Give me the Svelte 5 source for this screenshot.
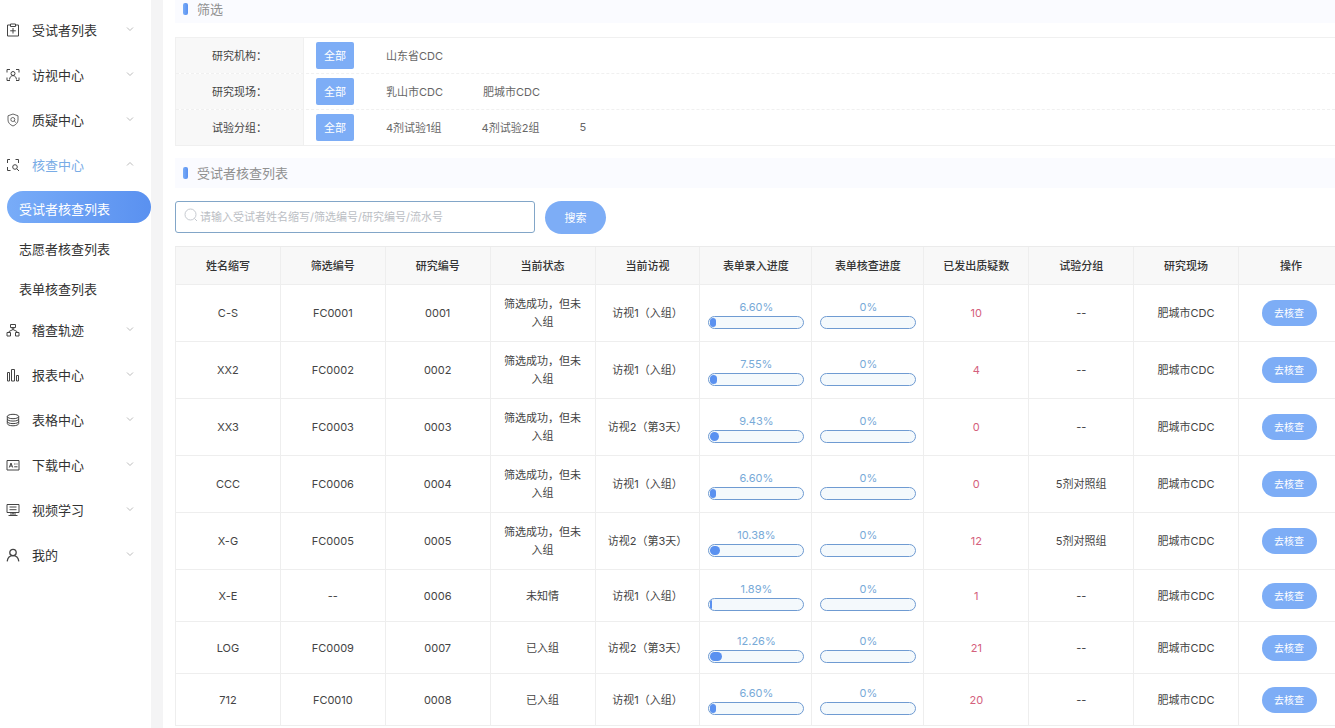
<script>
  let menus = [
    { title: "受试者列表", icon: "clipboard" },
    { title: "访视中心", icon: "visit" },
    { title: "质疑中心", icon: "shield" },
    {
      title: "核查中心",
      icon: "check",
      open: true,
      children: ["受试者核查列表", "志愿者核查列表", "表单核查列表"],
    },
    { title: "稽查轨迹", icon: "tree" },
    { title: "报表中心", icon: "bars" },
    { title: "表格中心", icon: "database" },
    { title: "下载中心", icon: "card" },
    { title: "视频学习", icon: "monitor" },
    { title: "我的", icon: "user" },
  ];
  let activePage = "受试者核查列表";

  let filters = [
    { label: "研究机构", options: ["山东省CDC"], selected: "全部" },
    { label: "研究现场", options: ["乳山市CDC", "肥城市CDC"], selected: "全部" },
    {
      label: "试验分组",
      options: ["4剂试验1组", "4剂试验2组", "5"],
      selected: "全部",
    },
  ];

  let columns = [
    "姓名缩写",
    "筛选编号",
    "研究编号",
    "当前状态",
    "当前访视",
    "表单录入进度",
    "表单核查进度",
    "已发出质疑数",
    "试验分组",
    "研究现场",
    "操作",
  ];

  const passed = "筛选成功，但未入组";
  const visit1 = "访视1（入组）";
  const visit2 = "访视2（第3天）";
  const site = "肥城市CDC";

  let subjects = [
    { name: "C-S", screen: "FC0001", no: "0001", status: passed, visit: visit1, entry: "6.60", check: "0", queries: 10, group: "--", site },
    { name: "XX2", screen: "FC0002", no: "0002", status: passed, visit: visit1, entry: "7.55", check: "0", queries: 4, group: "--", site },
    { name: "XX3", screen: "FC0003", no: "0003", status: passed, visit: visit2, entry: "9.43", check: "0", queries: 0, group: "--", site },
    { name: "CCC", screen: "FC0006", no: "0004", status: passed, visit: visit1, entry: "6.60", check: "0", queries: 0, group: "5剂对照组", site },
    { name: "X-G", screen: "FC0005", no: "0005", status: passed, visit: visit2, entry: "10.38", check: "0", queries: 12, group: "5剂对照组", site },
    { name: "X-E", screen: "--", no: "0006", status: "未知情", visit: visit1, entry: "1.89", check: "0", queries: 1, group: "--", site },
    { name: "LOG", screen: "FC0009", no: "0007", status: "已入组", visit: visit2, entry: "12.26", check: "0", queries: 21, group: "--", site },
    { name: "712", screen: "FC0010", no: "0008", status: "已入组", visit: visit1, entry: "6.60", check: "0", queries: 20, group: "--", site },
  ];

  let keyword = "";

  function toggle(menu) {
    menu.open = !menu.open;
    menus = menus;
  }

  function select(filter, option) {
    filter.selected = option;
    filters = filters;
  }
</script>

<div class="layout">
  <nav class="sidebar">
    {#each menus as menu}
      <button
        class="menu"
        class:menu--open={menu.open}
        on:click={() => toggle(menu)}
      >
        <svg class="menu__icon" viewBox="0 0 14 14" aria-hidden="true">
          {#if menu.icon === "clipboard"}
            <path d="M4.5 2H1.5v11h11V2H9.5M4.5 1h5v2.500h-5zM7 5v5.500M4.200 7.800h5.600" />
          {:else if menu.icon === "visit"}
            <path d="M4 1.500H1V4.500M10 1.500h3V4.500M4 12.500H1V9.500M10 12.500h3V9.500" />
            <circle cx="7" cy="5.500" r="2" />
            <path d="M3.500 11.500c.3-2.400 1.600-3.900 3.500-3.900s3.200 1.500 3.500 3.900" />
          {:else if menu.icon === "shield"}
            <path class="thin" d="M7 1l5 1.800v4.200c0 2.700-1.900 4.700-5 6-3.100-1.300-5-3.300-5-6V2.800z" />
            <circle class="thin" cx="6.800" cy="6.500" r="2" />
            <path class="thin" d="M8.200 8l1.600 1.500" />
          {:else if menu.icon === "check"}
            <path d="M4 1.500H1.500V5M9.500 1.500h3V5M4.500 12.500h-3V9" />
            <circle cx="9" cy="9" r="2.300" />
            <path d="M10.700 10.700l2.300 2.300" />
          {:else if menu.icon === "tree"}
            <path d="M4.500 1.500h5v3h-5zM5.500 4.500L7 6.500l1.500-2M7 6.500L3 8.500v1M7 6.500l4 2v1M1 13V9.500h3.500V13zM9.500 13V9.500H13V13z" />
          {:else if menu.icon === "bars"}
            <path d="M1.500 4.500h2v8.500h-2zM5.500 1.500h3V13h-3zM10.500 7.500h2V13h-2z" />
          {:else if menu.icon === "database"}
            <ellipse cx="7" cy="3.500" rx="5.700" ry="2.200" />
            <path d="M1.300 3.500v7c0 1.300 2.400 2.300 5.700 2.300s5.700-1 5.700-2.300v-7M1.300 6c0 1.200 2.400 2.100 5.700 2.100S12.700 7.200 12.700 6M1.300 8.500c0 1.200 2.400 2.100 5.700 2.100s5.700-.9 5.700-2.100" />
          {:else if menu.icon === "card"}
            <path d="M1 2.500h12v9.500H1zM3.300 9.500L5 5l1.700 4.500M4 8h2M8.200 6h1.300M10.500 6h1M8.200 8.800h3.300" />
          {:else if menu.icon === "monitor"}
            <path d="M1 1.500h12v8H1zM3.500 4h7M3.500 6.700h7M2.500 12.500h9M7 9.500v1.500M4 11h6" />
          {:else}
            <circle class="bold" cx="7" cy="4.500" r="3.200" />
            <path class="bold" d="M1.200 13.300C1.700 9.800 4 7.700 7 7.700s5.300 2.100 5.800 5.600" />
          {/if}
        </svg>
        <span class="menu__title">{menu.title}</span>
        <svg class="menu__arrow" viewBox="0 0 8 8" aria-hidden="true">
          <path d={menu.open ? "M1 5.500l3-3 3 3" : "M1 2.500l3 3 3-3"} />
        </svg>
      </button>
      {#if menu.open && menu.children}
        <div class="submenu">
          {#each menu.children as page}
            <a
              href="#{page}"
              class="submenu__item"
              class:submenu__item--active={page === activePage}
              on:click={() => (activePage = page)}>{page}</a
            >
          {/each}
        </div>
      {/if}
    {/each}
  </nav>

  <main class="content">
    <h2 class="section-title section-title--top">筛选</h2>

    <div class="filters">
      {#each filters as filter}
        <div class="filter">
          <div class="filter__label">{filter.label}：</div>
          <div class="filter__options">
            {#each ["全部", ...filter.options] as option}
              <button
                class="option"
                class:option--active={filter.selected === option}
                on:click={() => select(filter, option)}>{option}</button
              >
            {/each}
          </div>
        </div>
      {/each}
    </div>

    <h2 class="section-title">受试者核查列表</h2>

    <form class="search" on:submit|preventDefault>
      <label class="search__box">
        <svg class="search__icon" viewBox="0 0 14 14" aria-hidden="true">
          <circle cx="6.500" cy="6.500" r="5.500" />
          <path d="M10.500 10.500L13 13" />
        </svg>
        <input
          type="text"
          class="search__input"
          aria-label="搜索受试者"
          placeholder="请输入受试者姓名缩写/筛选编号/研究编号/流水号"
          bind:value={keyword}
        />
      </label>
      <button class="search__button">搜索</button>
    </form>

    <table class="table">
      <thead>
        <tr>
          {#each columns as column}
            <th class:wide={column.endsWith("进度")}>{column}</th>
          {/each}
        </tr>
      </thead>
      <tbody>
        {#each subjects as subject}
          <tr>
            <td>{subject.name}</td>
            <td>{subject.screen}</td>
            <td>{subject.no}</td>
            <td>{subject.status}</td>
            <td>{subject.visit}</td>
            {#each [subject.entry, subject.check] as percent}
              <td class="progress-cell">
                <div class="percent">{percent}%</div>
                <div
                  class="progress"
                  role="progressbar"
                  aria-label="进度"
                  aria-valuenow={Number(percent)}
                >
                  <div class="progress__fill" style="width: {percent}%"></div>
                </div>
              </td>
            {/each}
            <td class="queries">{subject.queries}</td>
            <td>{subject.group}</td>
            <td>{subject.site}</td>
            <td><button class="go">去核查</button></td>
          </tr>
        {/each}
      </tbody>
    </table>
  </main>
</div>

<style>
  :global(body) {
    margin: 0;
    background: #fff;
    font-family: Inter, "Noto Sans CJK SC", sans-serif;
    font-size: 11px;
    color: #555;
  }

  * {
    box-sizing: border-box;
  }

  button,
  input {
    font-family: inherit;
    font-size: 11px;
    border: none;
    padding: 0;
    background: none;
  }

  button {
    cursor: pointer;
  }

  svg {
    fill: none;
    flex: none;
  }

  .layout {
    display: flex;
    height: 100vh;
    overflow: hidden;
  }

  .sidebar {
    flex: none;
    width: 163px;
    padding-top: 8px;
    border-right: 12px solid #f4f4f5;
  }

  .menu {
    display: flex;
    align-items: center;
    width: 100%;
    height: 45px;
    padding: 0 17px 2px 6px;
    color: #333;
    text-align: left;
  }

  .menu__icon {
    width: 14px;
    height: 14px;
    stroke: #444;
    stroke-width: 1;
  }

  .menu__icon .thin {
    stroke-width: 0.8;
  }

  .menu__icon .bold {
    stroke-width: 1.3;
  }

  .menu__title {
    flex: 1;
    margin-left: 12px;
    font-size: 13px;
  }

  .menu--open .menu__title {
    color: #79ace6;
  }

  .menu__arrow {
    width: 8px;
    height: 8px;
    margin-bottom: 2px;
    stroke: #aaa;
    stroke-width: 0.8;
  }

  .submenu {
    display: flex;
    flex-direction: column;
    gap: 8px;
    padding: 3px 0 5px 7px;
  }

  .submenu__item {
    height: 32px;
    padding: 2px 0 0 12px;
    border-radius: 16px;
    color: #333;
    font-size: 13px;
    line-height: 32px;
    text-decoration: none;
  }

  .submenu__item--active {
    background: linear-gradient(90deg, #78acf8, #5a91f0);
    color: #fff;
  }

  .content {
    flex: 1;
    min-width: 0;
    padding-left: 12px;
  }

  .section-title {
    display: flex;
    align-items: center;
    gap: 9px;
    height: 30px;
    margin: 12px 0 13px;
    padding-left: 8px;
    background: #fafbff;
    color: #909090;
    font-size: 13px;
    font-weight: 400;
    line-height: 18px;
  }

  .section-title::before {
    content: "";
    width: 5px;
    height: 12px;
    border-radius: 2px;
    background: linear-gradient(90deg, #78acf8, #5a91f0);
  }

  .section-title--top {
    height: 23px;
    margin: 0 0 14px;
    padding-bottom: 5px;
  }

  .filters {
    border: 1px solid #f0f0f0;
    border-right: none;
  }

  .filter {
    display: flex;
    height: 36px;
  }

  .filter:first-child {
    height: 35px;
  }

  .filter + .filter {
    border-top: 1px dashed #f0f0f0;
  }

  .filter__label {
    display: flex;
    align-items: center;
    justify-content: center;
    width: 128px;
    padding-bottom: 1px;
    border-right: 1px solid #f0f0f0;
    background: #f8f8f8;
    color: #444;
  }

  .filter__options {
    display: flex;
    align-items: center;
    padding-left: 12px;
  }

  .option {
    height: 27px;
    padding: 0 20px 2px;
    border-radius: 2px;
    color: #666;
  }

  .option--active {
    margin-right: 12px;
    padding: 0 8px 2px;
    background: #7dadf6;
    color: #fff;
  }

  .search {
    display: flex;
    gap: 10px;
  }

  .search__box {
    display: flex;
    width: 360px;
    height: 32px;
    padding: 0 8px;
    border: 1px solid #82a6c8;
    border-radius: 3px;
  }

  .search__icon {
    width: 14px;
    height: 14px;
    margin-top: 6px;
    stroke: #b8bcc4;
    stroke-width: 0.8;
  }

  .search__input {
    flex: 1;
    margin-left: 2px;
    outline: none;
    color: #555;
  }

  .search__input::placeholder {
    color: #bbbec4;
  }

  .search__button {
    width: 61px;
    height: 33px;
    padding-bottom: 2px;
    border-radius: 17px;
    background: #7dadf6;
    color: #fff;
  }

  /* last column runs a little past the edge of the window */
  .table {
    width: calc(100% + 9px);
    margin-top: 12px;
    border-top: 1px solid #ebebeb;
    border-left: 1px solid #eee;
    border-spacing: 0;
    table-layout: fixed;
  }

  th,
  td {
    padding: 0 10px;
    border-right: 1px solid #eee;
    border-bottom: 1px solid #eee;
    line-height: 18px;
    text-align: center;
  }

  th {
    width: 9%;
    height: 38px;
    padding: 0;
    background: #f8f8f8;
    color: #333;
    font-weight: 500;
  }

  th.wide {
    width: 112px;
  }

  td {
    height: 52px;
    padding: 10px;
    color: #444;
  }

  td.progress-cell {
    padding: 10px 7px 10px 8px;
  }

  .percent {
    color: #78aad8;
  }

  .progress {
    height: 13px;
    padding: 1px;
    border: 1px solid #6f9bd2;
    border-radius: 7px;
    background: #f4f9fc;
    overflow: hidden;
  }

  .progress__fill {
    height: 9px;
    border-radius: 5px;
    background: #5a91f0;
  }

  td.queries {
    color: #d4607c;
  }

  .go {
    width: 55px;
    height: 26px;
    margin-right: 4px;
    padding-bottom: 1px;
    border-radius: 13px;
    background: #7dadf6;
    color: #fff;
    font-size: 10px;
  }
</style>
